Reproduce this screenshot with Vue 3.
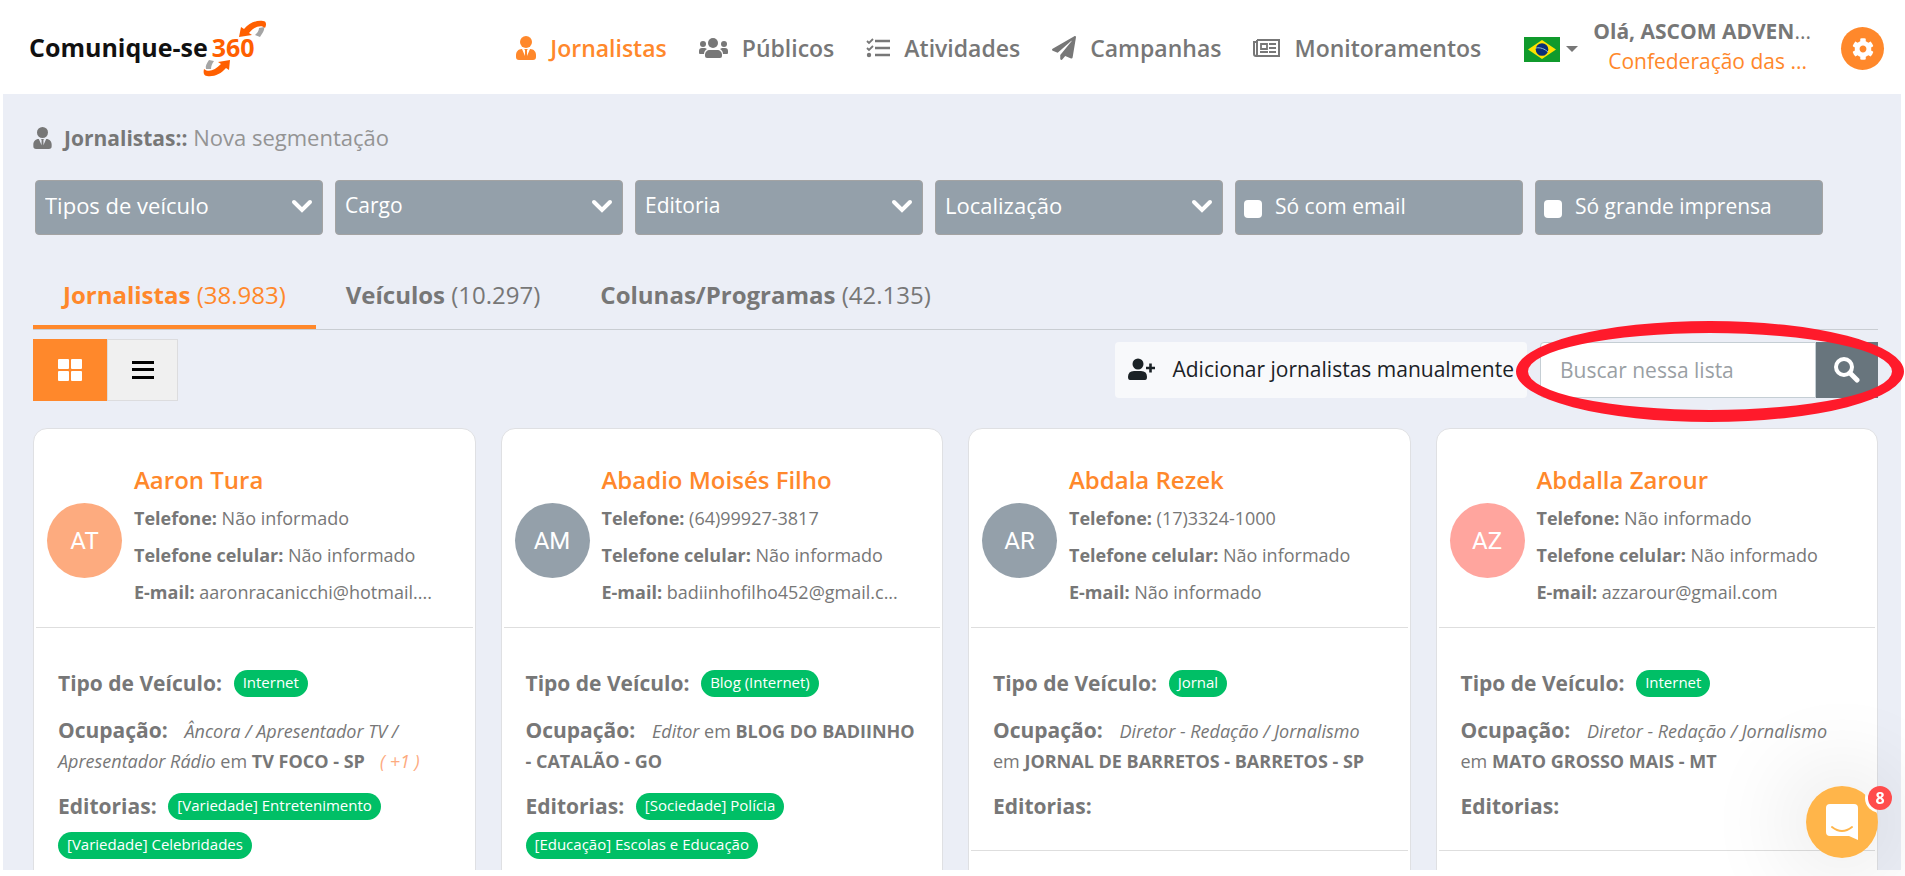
<template>
  <div class="page">
    <header class="topbar">
      <a href="#" class="logo">
        <span>Comunique-se</span>
        <span class="logo-number">360
          <svg class="logo-arrows" viewBox="0 0 64 58" aria-hidden="true">
            <path d="M36 17 L38 7 L41 9 C46 3 53 0 60 1 C63 1 64 4 62 8 C58 4 51 7 46 13 L49 15 Z" fill="#ff5f00" />
            <path d="M56 8 L61 7 C62 10 59 14 57 17 L52 15 C54 13 56 11 56 8 Z" fill="#a5a5a5" />
            <path d="M27 40 L26 50 L23 48 C18 54 11 57 4 56 C1 56 0 53 1 49 C6 53 12 50 18 44 L15 42 Z" fill="#ff5f00" />
            <path d="M6 40 L11 41 C9 44 8 46 8 49 L3 49 C2 46 4 43 6 40 Z" fill="#a5a5a5" />
          </svg>
        </span>
      </a>

      <nav class="menu">
        <a href="#" class="active">
          <svg width="20" height="24" viewBox="0 0 20 24">
            <circle cx="10" cy="6" r="6" />
            <path d="M6 13 L9 20 L9 14 L8 13 H12 L11 14 L11 20 L14 13 C18 13 20 16 20 19 V21 Q20 24 17 24 H3 Q0 24 0 21 V19 C0 16 2 13 6 13 Z" />
          </svg>
          Jornalistas
        </a>
        <a href="#">
          <svg width="29" height="20" viewBox="0 0 29 20">
            <circle cx="14" cy="5" r="5" />
            <circle cx="4" cy="6" r="3" />
            <circle cx="25" cy="6" r="3" />
            <path d="M11 12 H18 C21 12 23 14 23 17 V18 Q23 20 21 20 H8 Q6 20 6 18 V17 C6 14 8 12 11 12 Z" />
            <path d="M3 10 H6 L8 11 C6 12 5 14 5 16 H1 Q0 16 0 15 V13 Q0 10 3 10 Z" />
            <path d="M26 10 H23 L21 11 C23 12 24 14 24 16 H28 Q29 16 29 15 V13 Q29 10 26 10 Z" />
          </svg>
          Públicos
        </a>
        <a href="#">
          <svg width="24" height="20" viewBox="0 0 24 20">
            <path d="M9 3 H24 M9 10 H24 M9 17 H24" stroke="currentColor" stroke-width="2.6" />
            <path d="M1 3 L3 5 L7 1 M1 10 L3 12 L7 8" fill="none" stroke="currentColor" stroke-width="1.8" />
            <circle cx="3" cy="17" r="2.2" />
          </svg>
          Atividades
        </a>
        <a href="#">
          <svg width="24" height="24" viewBox="0 0 512 512">
            <path d="M476 3.2L12.5 270.6c-18.1 10.4-15.8 35.6 2.2 43.2L121 358.4l287.3-253.2c5.5-4.9 13.3 2.6 8.6 8.3L176 407v80.5c0 23.6 28.5 32.9 42.5 15.8L282 426l124.6 52.2c14.2 6 30.4-2.9 33-18.2l72-432C515 7.8 493.3-6.8 476 3.2z" />
          </svg>
          Campanhas
        </a>
        <a href="#">
          <svg width="27" height="18" viewBox="0 0 27 18">
            <path d="M4 1 H26 V17 H3 Q1 17 1 15 V3 H4 M4 1 V15 Q4 17 3 17" fill="none" stroke="currentColor" stroke-width="2" />
            <path d="M8 5 H14 V10 H8 Z M16 5 H23 M16 9 H23 M7 13 H15 M16 13 H23" fill="none" stroke="currentColor" stroke-width="1.8" />
          </svg>
          Monitoramentos
        </a>
      </nav>

      <div class="account">
        <button type="button" class="language" aria-label="Idioma">
          <svg width="36" height="25" viewBox="0 0 36 25">
            <rect width="36" height="25" fill="#109a2c" />
            <path d="M18 3 L32 12.5 L18 22 L4 12.5 Z" fill="#fee200" />
            <circle cx="18" cy="12.5" r="6.3" fill="#0b2e77" />
            <path d="M12 11 C16 10 21 12 24 15" fill="none" stroke="#8fb7d0" stroke-width="1" />
          </svg>
          <span class="caret"></span>
        </button>
        <div class="user">
          <strong>Olá, ASCOM ADVEN<span>...</span></strong>
          <a href="#">Confederação das ...</a>
        </div>
        <button type="button" class="settings" aria-label="Configurações">
          <svg width="22" height="22" viewBox="0 0 512 512">
            <path d="M487.400 315.700l-42.600-24.600c4.300-23.200 4.300-47 0-70.200l42.600-24.600c4.900-2.800 7.100-8.600 5.500-14-11.100-35.600-30-67.800-54.700-94.600-3.800-4.100-10-5.100-14.800-2.300L380.800 110c-17.900-15.400-38.500-27.300-60.800-35.100V25.800c0-5.600-3.900-10.500-9.400-11.700-36.700-8.200-74.300-7.800-109.200 0-5.500 1.200-9.400 6.100-9.400 11.700V75c-22.200 7.900-42.800 19.800-60.800 35.100L88.700 85.500c-4.900-2.800-11-1.900-14.800 2.300-24.700 26.700-43.600 58.900-54.700 94.600-1.700 5.400.6 11.200 5.500 14L67.300 221c-4.300 23.200-4.300 47 0 70.200l-42.600 24.600c-4.900 2.800-7.100 8.600-5.500 14 11.100 35.600 30 67.800 54.700 94.600 3.800 4.100 10 5.100 14.800 2.300l42.600-24.600c17.900 15.400 38.500 27.300 60.800 35.100v49.200c0 5.600 3.900 10.500 9.400 11.700 36.700 8.200 74.300 7.800 109.200 0 5.500-1.200 9.400-6.100 9.400-11.700v-49.200c22.200-7.900 42.800-19.800 60.800-35.100l42.600 24.600c4.900 2.800 11 1.900 14.800-2.300 24.700-26.700 43.600-58.900 54.700-94.600 1.500-5.500-.7-11.300-5.600-14.100zM256 336c-44.100 0-80-35.900-80-80s35.900-80 80-80 80 35.900 80 80-35.900 80-80 80z" />
          </svg>
        </button>
      </div>
    </header>

    <main class="content">
      <h1>
        <svg width="19" height="22" viewBox="0 0 20 24">
          <circle cx="10" cy="6" r="6" />
          <path d="M6 13 L9 20 L9 14 L8 13 H12 L11 14 L11 20 L14 13 C18 13 20 16 20 19 V21 Q20 24 17 24 H3 Q0 24 0 21 V19 C0 16 2 13 6 13 Z" />
        </svg>
        <span><b>Jornalistas::</b> Nova segmentação</span>
      </h1>

      <div class="filters">
        <div v-for="filter in filters" :key="filter.label" class="filter" :class="{'large' : filter.large}">
          <select :aria-label="filter.label">
            <option>{{ filter.label }}</option>
          </select>
          <svg width="22" height="14" viewBox="0 0 22 14">
            <path d="M3 3 L11 11 L19 3" fill="none" stroke="#fff" stroke-width="4" stroke-linecap="round" />
          </svg>
        </div>
        <label v-for="check in checks" :key="check" class="filter check">
          <input type="checkbox">
          {{ check }}
        </label>
      </div>

      <div class="tabs">
        <button v-for="tab in tabs" :key="tab.label" type="button" :class="{'active' : tab.label === activeTab}" @click="activeTab = tab.label">
          <b>{{ tab.label }}</b> ({{ tab.total }})
        </button>
      </div>

      <div class="toolbar">
        <div class="view">
          <button type="button" class="grid" aria-label="Grade">
            <svg width="26" height="24" viewBox="0 0 26 24">
              <rect x="1" y="1" width="11" height="10" rx="1" />
              <rect x="14" y="1" width="11" height="10" rx="1" />
              <rect x="1" y="13" width="11" height="10" rx="1" />
              <rect x="14" y="13" width="11" height="10" rx="1" />
            </svg>
          </button>
          <button type="button" class="list" aria-label="Lista">
            <svg width="22" height="18" viewBox="0 0 22 18">
              <rect width="22" height="3" />
              <rect y="7" width="22" height="3" />
              <rect y="15" width="22" height="3" />
            </svg>
          </button>
        </div>

        <button type="button" class="add">
          <svg width="27" height="22" viewBox="0 0 27 22">
            <circle cx="10" cy="6" r="5.500" />
            <path d="M6 13 H13 Q19 13 19 19 Q19 22 17 22 H2 Q0 22 0 19 Q0 13 6 13 Z" />
            <path d="M18 10 H27 M22.500 5.500 V14.500" stroke="currentColor" stroke-width="2.600" />
          </svg>
          Adicionar jornalistas manualmente
        </button>

        <form class="search" @submit.prevent>
          <input v-model="term" type="text" placeholder="Buscar nessa lista" aria-label="Buscar nessa lista">
          <button type="submit" aria-label="Buscar">
            <svg width="26" height="26" viewBox="0 0 26 26">
              <circle cx="10" cy="10" r="8" fill="none" stroke="#fff" stroke-width="4" />
              <path d="M16 16 L23 23" stroke="#fff" stroke-width="5" stroke-linecap="round" />
            </svg>
          </button>
          <span class="highlight"></span>
        </form>
      </div>

      <div class="cards">
        <article v-for="person in people" :key="person.name" class="card">
          <div class="card-head">
            <div class="avatar" :class="person.color">{{ person.initials }}</div>
            <div class="info">
              <h2><a href="#">{{ person.name }}</a></h2>
              <p><b>Telefone:</b> {{ person.phone }}</p>
              <p><b>Telefone celular:</b> {{ person.mobile }}</p>
              <p><b>E-mail:</b> {{ person.email }}</p>
            </div>
          </div>
          <div class="card-body">
            <p class="row"><b class="label">Tipo de Veículo:</b> <span class="tag">{{ person.type }}</span></p>
            <p class="row job">
              <b class="label">Ocupação:</b> <i>{{ person.role }}</i> em <b>{{ person.company }}</b>
              <a v-if="person.more" href="#" class="more">( {{ person.more }} )</a>
            </p>
            <p class="row topics">
              <b class="label">Editorias:</b> <span v-for="topic in person.topics" :key="topic" class="tag">{{ topic }}</span>
            </p>
          </div>
          <div class="card-foot"></div>
        </article>
      </div>
    </main>

    <button type="button" class="chat" aria-label="Mensagens">
      <svg width="72" height="72" viewBox="0 0 72 72">
        <defs>
          <mask id="cut">
            <rect width="72" height="72" fill="#fff" />
            <circle cx="74" cy="12" r="15" fill="#000" />
          </mask>
        </defs>
        <circle cx="36" cy="36" r="36" fill="#ffb54a" mask="url(#cut)" />
        <path d="M24 18 H48 Q52 18 52 22 V54 L43 50 H24 Q20 50 20 46 V22 Q20 18 24 18 Z" fill="#fff" />
        <path d="M26 41 Q36 49 46 41" fill="none" stroke="#ffb54a" stroke-width="2" stroke-linecap="round" />
      </svg>
      <span class="count">8</span>
    </button>
  </div>
</template>

<script setup>
import {ref} from "vue";

const filters = [
  {label: 'Tipos de veículo', large: true},
  {label: 'Cargo'},
  {label: 'Editoria'},
  {label: 'Localização', large: true},
]
const checks = ['Só com email', 'Só grande imprensa']
const tabs = [
  {label: 'Jornalistas', total: '38.983'},
  {label: 'Veículos', total: '10.297'},
  {label: 'Colunas/Programas', total: '42.135'},
]
const activeTab = ref('Jornalistas')
const term = ref('')

const people = [
  {
    name: 'Aaron Tura',
    initials: 'AT',
    color: 'orange',
    phone: 'Não informado',
    mobile: 'Não informado',
    email: 'aaronracanicchi@hotmail....',
    type: 'Internet',
    role: 'Âncora / Apresentador TV / Apresentador Rádio',
    company: 'TV FOCO - SP',
    more: '+1',
    topics: ['[Variedade] Entretenimento', '[Variedade] Celebridades'],
  },
  {
    name: 'Abadio Moisés Filho',
    initials: 'AM',
    color: 'grey',
    phone: '(64)99927-3817',
    mobile: 'Não informado',
    email: 'badiinhofilho452@gmail.c...',
    type: 'Blog (Internet)',
    role: 'Editor',
    company: 'BLOG DO BADIINHO - CATALÃO - GO',
    topics: ['[Sociedade] Polícia', '[Educação] Escolas e Educação'],
  },
  {
    name: 'Abdala Rezek',
    initials: 'AR',
    color: 'grey',
    phone: '(17)3324-1000',
    mobile: 'Não informado',
    email: 'Não informado',
    type: 'Jornal',
    role: 'Diretor - Redação / Jornalismo',
    company: 'JORNAL DE BARRETOS - BARRETOS - SP',
    topics: [],
  },
  {
    name: 'Abdalla Zarour',
    initials: 'AZ',
    color: 'pink',
    phone: 'Não informado',
    mobile: 'Não informado',
    email: 'azzarour@gmail.com',
    type: 'Internet',
    role: 'Diretor - Redação / Jornalismo',
    company: 'MATO GROSSO MAIS - MT',
    topics: [],
  },
]
</script>

<style>
body {
  margin: 0;
  background-color: #fff;
}
</style>

<style scoped>
* {
  box-sizing: border-box;
}

.page {
  display: flex;
  flex-direction: column;
  height: 100vh;
  padding: 0 4px 6px 3px;
  overflow: hidden;
  font-family: "Open Sans", "Noto Sans", sans-serif;
  color: #777;
}

a {
  color: inherit;
  text-decoration: none;
}

button,
input,
select {
  font-family: inherit;
}

button {
  padding: 0;
  border: none;
  background: none;
  color: inherit;
  cursor: pointer;
}

svg {
  flex-shrink: 0;
  fill: currentColor;
}

h1,
h2,
p {
  margin: 0;
}

/* Header */
.topbar {
  display: flex;
  align-items: center;
  flex-shrink: 0;
  height: 94px;
  padding: 0 17px 0 26px;
}

.logo {
  display: flex;
  align-items: center;
  gap: 4px;
  color: #111;
  font-size: 25px;
  font-weight: 700;
}

.logo-number {
  position: relative;
  color: #ff5f00;
}

.logo-arrows {
  position: absolute;
  left: -9px;
  top: -10px;
  width: 64px;
  height: 58px;
}

.menu {
  display: flex;
  gap: 32px;
  margin-left: auto;
  padding-top: 2px;
}

.menu a {
  display: flex;
  align-items: center;
  gap: 14px;
  font-size: 23px;
  font-weight: 600;
}

.menu a.active {
  color: #ff882b;
}

.account {
  display: flex;
  align-items: center;
  margin-left: 43px;
}

.language {
  display: flex;
  align-items: center;
  gap: 6px;
  padding-top: 4px;
}

.caret {
  border: 6px solid transparent;
  border-top-color: #777;
  border-bottom: none;
}

.user {
  display: flex;
  flex-direction: column;
  align-items: flex-end;
  margin: 0 30px 2px 15px;
  font-size: 21px;
  line-height: 30px;
}

.user strong span {
  font-weight: 400;
}

.user a {
  padding-right: 4px;
  color: #ff882b;
}

.settings {
  display: flex;
  align-items: center;
  justify-content: center;
  width: 43px;
  height: 43px;
  margin-top: 3px;
  border-radius: 50%;
  background-color: #ff882b;
  color: #fff;
}

/* Content */
.content {
  flex: 1;
  min-height: 0;
  padding: 27px 23px 0 30px;
  overflow-x: visible;
  overflow-y: clip;
  background-color: #ebeef6;
}

h1 {
  display: flex;
  align-items: center;
  gap: 12px;
  color: #949494;
  font-size: 22px;
  font-weight: 400;
  line-height: 32px;
}

h1 b {
  font-size: 21px;
}

h1 b,
h1 svg {
  color: #777;
}

.filters {
  display: grid;
  grid-template-columns: repeat(6, 1fr);
  gap: 12px;
  padding: 26px 55px 0 2px;
}

.filter {
  position: relative;
  height: 55px;
  border: 1px solid #a3a3a3;
  border-radius: 4px;
  background-color: #94a0aa;
  color: #fff;
  font-size: 21px;
}

.filter select {
  width: 100%;
  height: 100%;
  padding: 0 44px 5px 9px;
  border: none;
  appearance: none;
  background: none;
  color: #fff;
  font-size: 21px;
}

.large select {
  font-size: 22px;
}

.filter svg {
  position: absolute;
  right: 9px;
  top: 18px;
  pointer-events: none;
}

.check {
  display: flex;
  align-items: center;
  gap: 13px;
  padding: 0 0 3px 8px;
}

.check input {
  width: 18px;
  height: 18px;
  margin: 6px 0 0;
  border-radius: 4px;
  appearance: none;
  background-color: #fff;
}

.tabs {
  display: flex;
  margin-top: 30px;
  border-bottom: 1px solid #c9cdd2;
}

.tabs button {
  height: 64px;
  padding: 0 30px 2px;
  border-bottom: 4px solid transparent;
  font-size: 24px;
}

.tabs button.active {
  border-bottom-color: #ff882b;
  color: #ff882b;
}

.toolbar {
  display: flex;
  align-items: center;
  margin-top: 9px;
}

.view {
  display: flex;
  margin-right: auto;
}

.view button {
  display: flex;
  align-items: center;
  justify-content: center;
  width: 71px;
  height: 62px;
}

.view .grid {
  width: 74px;
  background-color: #ff882b;
  color: #fff;
}

.view .list {
  border: 1px solid #dcdcde;
  background-color: #f0f0f0;
  color: #000;
}

.add {
  display: flex;
  align-items: center;
  gap: 17px;
  height: 56px;
  padding: 0 13px 2px;
  border-radius: 4px;
  background-color: #f8f9fb;
  color: #1b2226;
  font-size: 21px;
}

.search {
  position: relative;
  display: flex;
  width: 338px;
  margin-left: 13px;
}

.search input {
  flex: 1;
  min-width: 0;
  height: 56px;
  padding: 0 19px;
  border: 1px solid #c5ced4;
  border-radius: 4px 0 0 4px;
  background-color: #fff;
  font-size: 21px;
}

.search input::placeholder {
  color: #9a9fa4;
  opacity: 1;
}

.search button {
  display: flex;
  align-items: center;
  justify-content: center;
  width: 62px;
  background-color: #68757d;
}

/* Red ring over the search box */
.highlight {
  position: absolute;
  inset: -21px -26px -24px -24px;
  border: 12px solid #ff1a2b;
  border-radius: 50%;
  pointer-events: none;
}

/* Cards */
.cards {
  display: grid;
  grid-template-columns: repeat(4, minmax(0, 1fr));
  gap: 25px;
  padding-top: 27px;
}

.card {
  padding: 0 2px;
  border: 1px solid #dfe0e3;
  border-radius: 14px;
  background-color: #fff;
}

.card-head {
  display: flex;
  align-items: center;
  gap: 12px;
  padding: 29px 11px 4px;
  border-bottom: 1px solid #dedede;
}

.avatar {
  display: flex;
  align-items: center;
  justify-content: center;
  flex-shrink: 0;
  width: 75px;
  height: 75px;
  border-radius: 50%;
  color: #fff;
  font-family: Roboto, sans-serif;
  font-size: 24px;
}

.orange {
  background-color: #fdab7f;
}

.grey {
  background-color: #94a0aa;
}

.pink {
  background-color: #ffa59e;
}

.info {
  padding: 1px 0 12px;
  font-size: 18px;
  line-height: 37px;
  white-space: nowrap;
}

.info h2 {
  color: #ff882b;
  font-size: 24px;
  font-weight: 600;
  line-height: 41px;
}

.card-body {
  padding: 40px 20px 23px 22px;
  border-bottom: 1px solid #dedede;
  font-size: 18px;
  line-height: 30px;
}

.row {
  margin-bottom: 16px;
}

.label {
  margin-right: 7px;
  font-size: 21px;
}

.job {
  margin-bottom: 11px;
}

.job .label {
  margin-right: 12px;
}

.more {
  margin-left: 15px;
  color: #fdab7f;
  font-size: 18px;
  font-style: italic;
}

.tag {
  display: inline-block;
  height: 27px;
  margin-right: 9px;
  padding: 0 9px;
  border-radius: 14px;
  background-color: #00bf66;
  color: #fff;
  font-size: 15px;
  line-height: 24px;
  vertical-align: 3px;
}

.topics {
  margin-bottom: 0;
  line-height: 39px;
}

.card-foot {
  height: 60px;
}

/* Chat launcher */
.chat {
  position: fixed;
  right: 27px;
  bottom: 18px;
  width: 72px;
  height: 72px;
  border-radius: 50%;
  box-shadow: 0 0 90px 20px rgba(0, 0, 0, 0.09);
}

.chat svg {
  display: block;
}

.count {
  position: absolute;
  top: 0;
  right: -14px;
  width: 24px;
  height: 24px;
  border-radius: 50%;
  background-color: #ff4c4c;
  color: #fff;
  font-size: 16px;
  font-weight: 700;
  line-height: 24px;
}
</style>
